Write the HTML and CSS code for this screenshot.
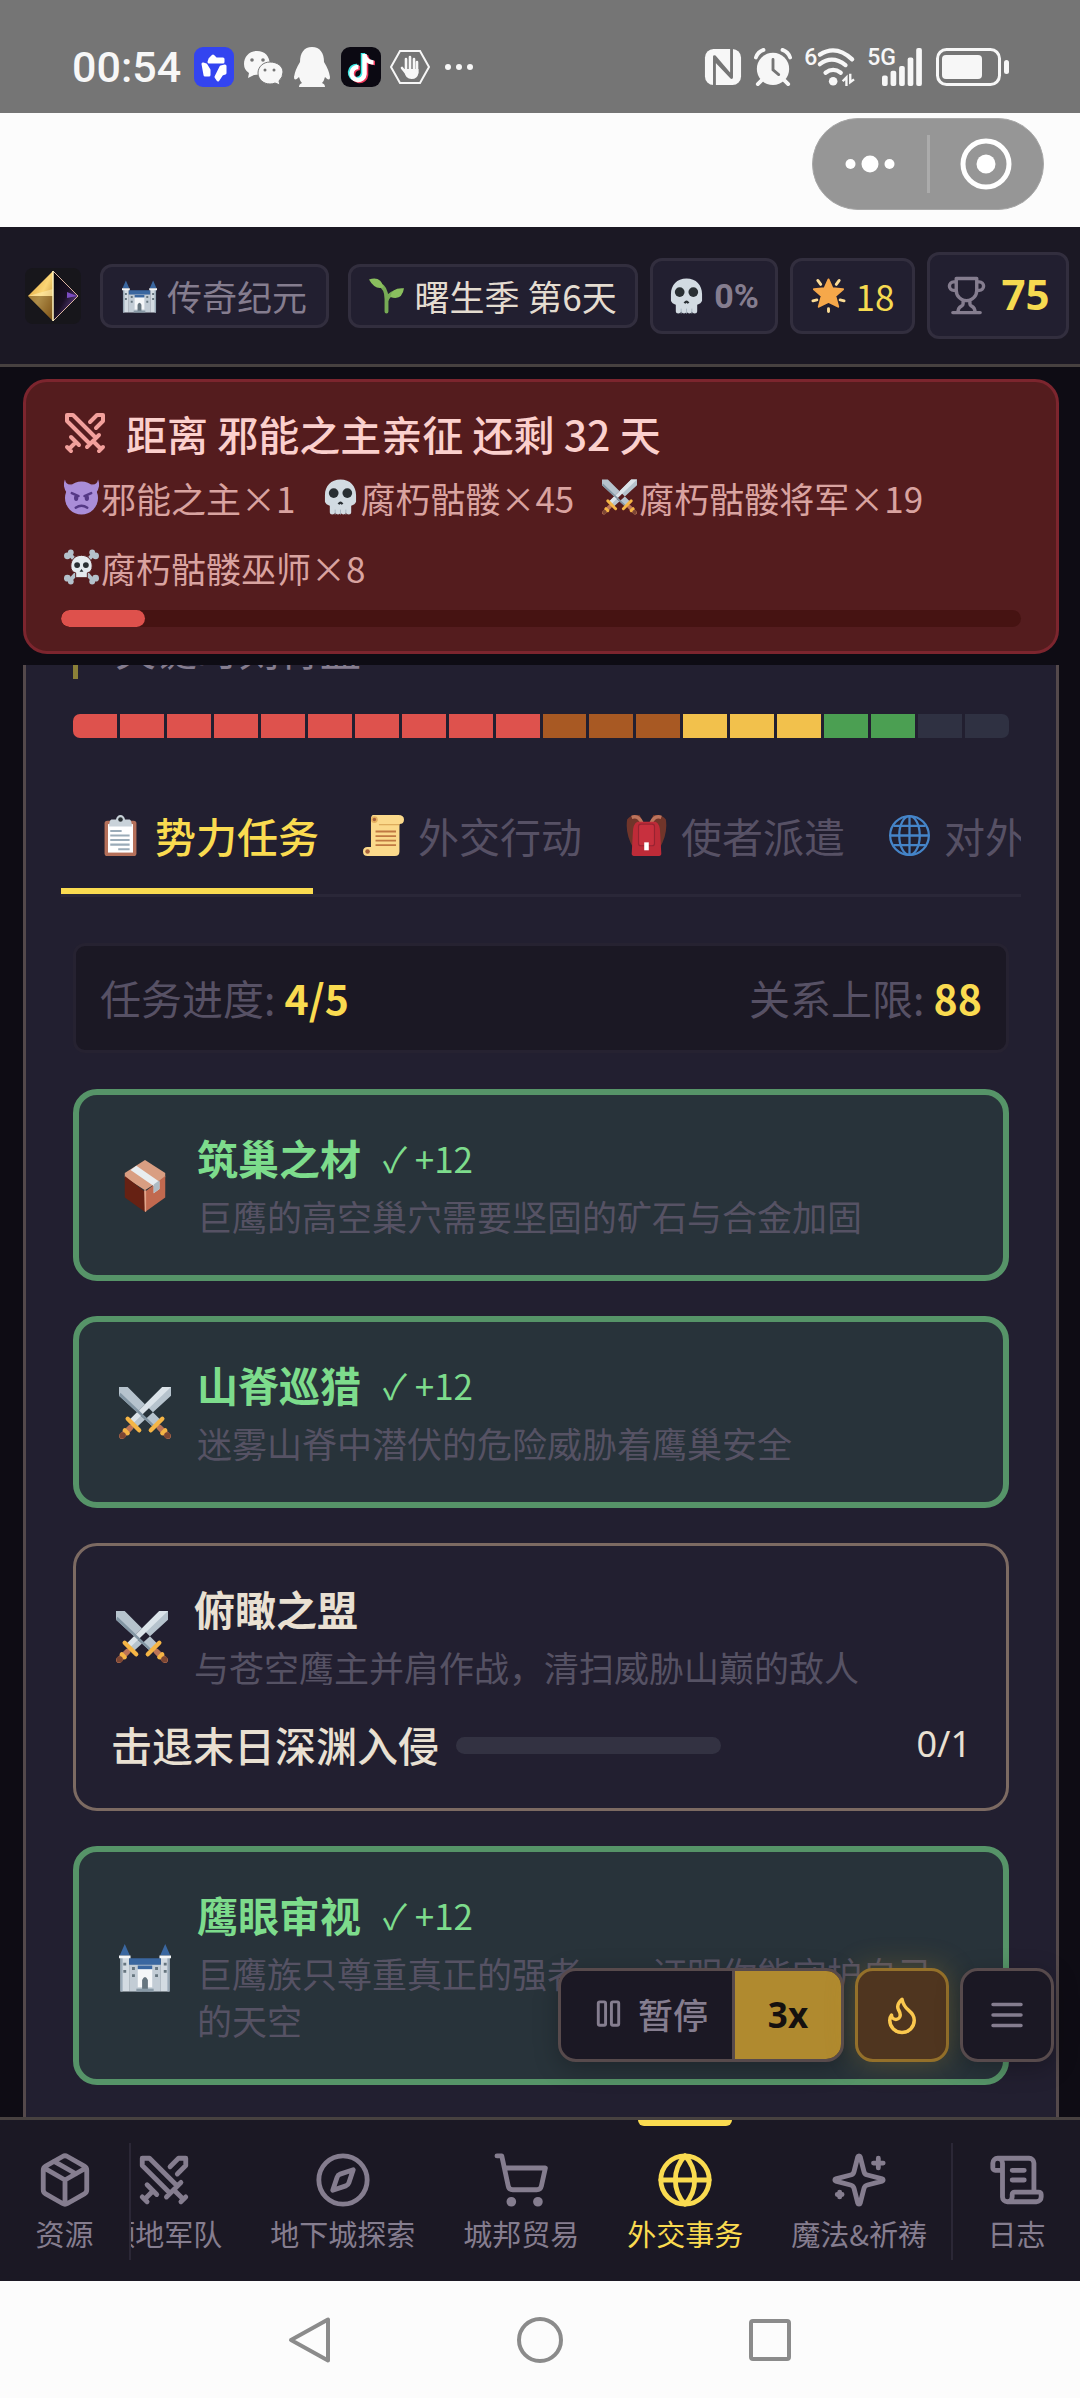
FILE: index.html
```html
<!DOCTYPE html>
<html lang="zh-CN">
<head>
    <meta charset="UTF-8">
    <meta name="viewport" content="width=device-width, initial-scale=1.0">
    <title>外交事务</title>
    <link rel="stylesheet" href="styles.css">
</head>
<body>
    <!-- icon sprite -->
    <svg class="sprite" aria-hidden="true">
        <defs>
            <linearGradient id="gold" x1="0" y1="0" x2="1" y2="1"><stop offset="0" stop-color="#d8982e"/><stop offset=".5" stop-color="#fbd676"/><stop offset="1" stop-color="#a8701c"/></linearGradient>
            <linearGradient id="violet" x1="0" y1="0" x2="1" y2="1"><stop offset="0" stop-color="#0a080c"/><stop offset=".5" stop-color="#1a1024"/><stop offset="1" stop-color="#8a5cc8"/></linearGradient>
        </defs>
        <symbol id="swords" viewBox="0 0 24 24">
            <path d="M14.5 17.5 3 6V3h3l11.5 11.5M13 19l6-6M16 16l4 4M19 21l2-2M14.5 6.5 18 3h3v3l-3.500 3.500M5 14l4 4M7 17l-3 3M3 19l2 2"/>
        </symbol>
        <symbol id="trophy" viewBox="0 0 24 24">
            <path d="M6 9H4.500a2.500 2.500 0 0 1 0-5H6M18 9h1.500a2.500 2.500 0 0 0 0-5H18M4 22h16M10 14.660V17c0 .550-.470.980-.970 1.210C7.850 18.750 7 20.240 7 22M14 14.660V17c0 .550.470.980.970 1.210C16.150 18.750 17 20.240 17 22M18 2H6v7a6 6 0 0 0 12 0V2Z"/>
        </symbol>
        <symbol id="box" viewBox="0 0 24 24">
            <path d="M21 8a2 2 0 0 0-1-1.730l-7-4a2 2 0 0 0-2 0l-7 4A2 2 0 0 0 3 8v8a2 2 0 0 0 1 1.730l7 4a2 2 0 0 0 2 0l7-4A2 2 0 0 0 21 16ZM3.300 7 12 12l8.700-5M12 22V12M7.500 4.270l9 5.150"/>
        </symbol>
        <symbol id="compass" viewBox="0 0 24 24">
            <circle cx="12" cy="12" r="10"/><path d="m16.240 7.760-1.800 5.410a2 2 0 0 1-1.270 1.270L7.760 16.240l1.800-5.410a2 2 0 0 1 1.270-1.270Z"/>
        </symbol>
        <symbol id="cart" viewBox="0 0 24 24">
            <circle cx="8" cy="21" r="1"/><circle cx="19" cy="21" r="1"/><path d="M2.050 2.050h2l2.660 12.420a2 2 0 0 0 2 1.580h9.780a2 2 0 0 0 1.950-1.570l1.650-7.430H5.120"/>
        </symbol>
        <symbol id="globe" viewBox="0 0 24 24">
            <circle cx="12" cy="12" r="10"/><path d="M12 2a14.500 14.500 0 0 0 0 20 14.500 14.500 0 0 0 0-20M2 12h20"/>
        </symbol>
        <symbol id="sparkles" viewBox="0 0 24 24">
            <path d="M9.940 15.500A2 2 0 0 0 8.500 14.060l-6.140-1.580a.5.5 0 0 1 0-.960L8.500 9.940A2 2 0 0 0 9.940 8.500l1.580-6.140a.5.5 0 0 1 .960 0L14.060 8.500A2 2 0 0 0 15.500 9.940l6.140 1.580a.5.5 0 0 1 0 .960L15.500 14.060a2 2 0 0 0-1.440 1.440l-1.580 6.140a.5.5 0 0 1-.960 0ZM20 3v4M22 5h-4M4 17v2M5 18H3"/>
        </symbol>
        <symbol id="scroll" viewBox="0 0 24 24">
            <path d="M15 12h-5M15 8h-5M19 17V5a2 2 0 0 0-2-2H4M8 21h12a2 2 0 0 0 2-2v-1a1 1 0 0 0-1-1H11a1 1 0 0 0-1 1v1a2 2 0 1 1-4 0V5a2 2 0 1 0-4 0v2a1 1 0 0 0 1 1h3"/>
        </symbol>
        <symbol id="flame" viewBox="0 0 24 24">
            <path d="M8.500 14.500A2.500 2.500 0 0 0 11 12c0-1.380-.500-2-1-3-1.070-2.140-.220-4.050 2-6 .500 2.500 2 4.900 4 6.500 2 1.600 3 3.500 3 5.500a7 7 0 1 1-14 0c0-1.150.430-2.290 1-3a2.500 2.500 0 0 0 2.500 2.500z"/>
        </symbol>
        <symbol id="menu" viewBox="0 0 24 24"><path d="M4 6h16M4 12h16M4 18h16"/></symbol>
        <symbol id="pause" viewBox="0 0 24 24"><rect x="5" y="4" width="5" height="16" rx="1"/><rect x="14" y="4" width="5" height="16" rx="1"/></symbol>

        <symbol id="e-castle" viewBox="0 0 36 36">
            <path fill="#d3dbe2" d="M1 11h6v24H1zM29 11h6v24h-6z"/><path fill="#c2ccd5" d="M7 16h22v19H7z"/><path fill="#9aaab8" d="M1 11h1.500v24H1zM33.500 11H35v24h-1.500z"/>
            <path fill="#3a67a0" d="m4 2 3.500 8h-7zM32 2l3.500 8h-7zM7 12h22v4.500H7z"/><path fill="#f4f6f8" d="M0 10h8v2H0zM28 10h8v2h-8zM13 19h10v13H13z"/>
            <path fill="#3a67a0" d="M13 17h10v2.500H13z"/><path fill="#66757f" d="M16 35v-8q2-4 4 0v8zM3 15h2v2H3zM3 20h2v2H3zM31 15h2v2h-2zM31 20h2v2h-2zM9 18h2v2H9zM25 18h2v2h-2zM9 23h2v2H9zM25 23h2v2h-2z"/><path fill="#8899a6" d="M12 33h12v2H12z"/>
        </symbol>
        <symbol id="e-seedling" viewBox="0 0 36 36">
            <path fill="none" stroke="#77ab55" stroke-width="4" stroke-linecap="round" d="M18 34V21Q18 9 10 6M18 23q2-7 9-9"/><path fill="#8abf5e" d="M0 1q12-4 15 8-9 3-15-8zM36 10q-2 13-14 9Q23 9 36 10z"/>
        </symbol>
        <symbol id="e-skull" viewBox="0 0 36 36">
            <path fill="#d2dbe2" d="M18 0C8 0 2 7 2 16v7q1 3 5 4v7q0 2 2.500 2t3-2q1 2 3 2t2.500-2q1 2 3 2t2.500-2q.5 2 3 2t2.500-2v-7q4-1 5-4v-7C34 7 28 0 18 0z"/>
            <circle cx="11" cy="14" r="5" fill="#292f33"/><circle cx="25" cy="14" r="5" fill="#292f33"/><path fill="#292f33" d="M15 25q3-5 6 0l-2 1-1-1-1 1z"/><path stroke="#a9b7c2" d="M12.500 31v5M18 31v5M23.500 31v5"/>
        </symbol>
        <symbol id="e-star" viewBox="0 0 36 36">
            <path stroke="#fbdc95" stroke-width="3" stroke-linecap="round" d="M7 2l3 4M29 2l-3 4M2 23l4-1M34 23l-4-1M18 31v3"/><path fill="#f6a84a" stroke="#f6a84a" stroke-width="2" stroke-linejoin="round" d="m18 1 4 9 11 1-8 7 3 11-10-5-10 5 3-11-8-7 11-1z"/>
        </symbol>
        <symbol id="e-imp" viewBox="0 0 36 36">
            <path fill="#aa8dd8" d="M1 0q1 6 7 5l-5 9Q-2 7 1 0zM35 0q-1 6-7 5l5 9q5-7 2-14z"/><circle cx="18" cy="19" r="17" fill="#aa8dd8"/>
            <path fill="none" stroke="#553986" stroke-width="2.500" stroke-linecap="round" d="m8 14 7 3M28 14l-7 3M12 29q6-4 12 0"/><ellipse cx="12.500" cy="19" rx="2.200" ry="3" fill="#553986"/><ellipse cx="23.500" cy="19" rx="2.200" ry="3" fill="#553986"/>
        </symbol>
        <symbol id="e-swords" viewBox="0 0 36 36">
            <path fill="#b6c3cd" d="M0 0h6l23 23-5 5L0 6zM36 0h-6L7 23l5 5L36 6z"/><path fill="#dbe3e9" d="M36 0h-6L7 23l2.500 2.500z"/><path fill="#8295a3" d="m0 6 1-2 23 22v2z"/>
            <path fill="none" stroke="#bc7456" stroke-width="4" stroke-linecap="round" d="m8 28-6 6M28 28l6 6"/><path fill="none" stroke="#f5b545" stroke-width="3" stroke-linecap="round" d="m6 22 8 8M30 22l-8 8M4 30l2 2M32 30l-2 2"/><circle cx="2.500" cy="33.500" r="2.200" fill="#7c4633"/><circle cx="33.500" cy="33.500" r="2.200" fill="#7c4633"/>
        </symbol>
        <symbol id="e-crossbones" viewBox="0 0 36 36">
            <g fill="#b4c1cb"><path d="m5 7 3-3 23 26-3 3zM31 7l-3-3L5 30l3 3z"/><circle cx="3.500" cy="6.500" r="3.500"/><circle cx="7" cy="3" r="3"/><circle cx="32.500" cy="6.500" r="3.500"/><circle cx="29" cy="3" r="3"/><circle cx="3.500" cy="29.500" r="3.500"/><circle cx="7" cy="33" r="3"/><circle cx="32.500" cy="29.500" r="3.500"/><circle cx="29" cy="33" r="3"/></g>
            <path fill="#e4eaee" stroke="#541c1e" d="M18 6C11 6 7 11 7 17q0 6 5 7v5h12v-5q5-1 5-7C29 11 25 6 18 6z"/><circle cx="13.500" cy="16" r="3" fill="#292f33"/><circle cx="22.500" cy="16" r="3" fill="#292f33"/><path fill="#292f33" d="m16 23 2-3 2 3z"/>
        </symbol>
        <symbol id="e-clipboard" viewBox="0 0 36 36">
            <rect x="4" y="5" width="28" height="31" rx="2.500" fill="#b5705a"/><path fill="#fff" d="M7 8h22v25H7z"/><path fill="none" stroke="#9aabb8" stroke-width="1.800" d="M9 14h10M9 18h17M9 22h17M9 26h17M16 30h10"/>
            <path fill="#c9d2d9" d="M10 4h4q1-4 4-4t4 4h4q2 1 2 6H8q0-5 2-6z"/><circle cx="18" cy="4" r="2" fill="#292f33"/>
        </symbol>
        <symbol id="e-scroll" viewBox="0 0 36 36">
            <path fill="#fbd98b" d="M9 0h22q5 0 5 4t-4 4v24q0 4-4 4H4q-4 0-4-4t4-4h3V4q0-4 2-4z"/><circle cx="10" cy="4" r="3" fill="#e5b15f"/><circle cx="10" cy="4" r="1.500" fill="#a6623c"/><circle cx="4" cy="32" r="2" fill="#a6623c"/><path stroke="#d9a657" d="M14 8.500h18"/><path fill="none" stroke="#c07842" stroke-width="1.600" d="M11 14.500h18M11 18.500h18M11 22.500h18M11 26.500h18"/>
        </symbol>
        <symbol id="e-backpack" viewBox="0 0 36 36">
            <path fill="#70352a" d="M12 0Q5-1 1 4-1 17 7 30h22q8-13 6-26-4-5-11-4l-3 7h-6z"/><path fill="none" stroke="#bd745c" stroke-width="3" d="M14 7Q11 0 5 2M22 7q3-7 9-5"/>
            <path fill="#be2b38" d="M10 6h16q4 2 4 10l1 18q0 2-3 2H8q-3 0-3-2l1-18Q6 8 10 6z"/><rect x="11" y="8" width="14" height="19" rx="2" fill="#c8303e" stroke="#972331"/><path fill="#fff" d="M16 24h4v7h-4z"/>
        </symbol>
        <symbol id="e-globe" viewBox="0 0 36 36">
            <g fill="none" stroke="#4584c8" stroke-width="2"><circle cx="18" cy="18" r="17"/><ellipse cx="18" cy="18" rx="9" ry="17"/><path d="M1 18h34M18 1v34M4 9.500h28M4 26.500h28"/></g>
        </symbol>
        <symbol id="e-package" viewBox="0 0 36 36">
            <path fill="#d99e82" d="m18 0 14 9v3L18 21 4 12V9z"/><path fill="#662113" d="m4 11 14 11v14L4 26z"/><path fill="#c1694f" d="m32 11-14 11v14l14-10z"/><path fill="#e2a58b" d="M17.400 21h1.400v15l-1-.500z"/><path fill="#e8edf0" d="m8 7 4-3 16 11v5l-4 3v-5z"/><path fill="#aebbc4" d="m24 17 4-3v6l-4 3z"/>
        </symbol>
    </svg>

    <div class="statusbar">
        <div class="status-left">
            <span class="clock">00:54</span>
            <svg class="st" viewBox="0 0 40 40"><rect width="40" height="40" rx="9" fill="#3344f0"/><g fill="#fff" stroke="#fff" stroke-width="3" stroke-linejoin="round"><path d="m16 12 3-3 3 3h7v3H15z"/><path d="m9 17 3 1 3 5v5l-4 0z"/><path d="m31 19-4 1-5 10 2 3 4-6 3-1z"/></g></svg>
            <svg class="st" viewBox="0 0 40 40" fill="#f7f7f7"><path d="M14 4C6 4 1 10 1 17q0 6 5 9l-1 5 6-3q12 0 16-10Q26 4 14 4z"/><path stroke="#757575" d="M27 15c-7 0-12 5-12 11s5 11 12 11q3 0 5-1l5 2-1-4q4-4 4-9c0-6-6-10-13-10z"/><g fill="#757575"><circle cx="9" cy="13" r="1.800"/><circle cx="20" cy="13" r="1.800"/><circle cx="22" cy="23" r="1.500"/><circle cx="31" cy="23" r="1.500"/></g></svg>
            <svg class="st" viewBox="0 0 40 40" fill="#f7f7f7"><path d="M20 0C12 0 8 6 8 15q-5 8-6 15 0 5 5 0 1 4 3 6-3 1-3 4h26q0-3-3-4 2-2 3-6 5 5 5 0-1-7-6-15C32 6 28 0 20 0z"/></svg>
            <svg class="st" viewBox="0 0 40 40"><rect width="40" height="40" rx="9" fill="#0b0912"/><g fill="none" stroke-width="4.500"><path stroke="#3ce8e4" d="M22 6v20a6.500 6.500 0 1 1-6-7M22 8q2 7 9 7"/><path stroke="#f2375a" d="M25 8v20a6.500 6.500 0 1 1-6-7M25 9q2 7 9 7"/><path stroke="#fff" d="M23.500 7v20a6.500 6.500 0 1 1-6-7M23.500 8.500q2 7 9 7"/></g></svg>
            <svg class="st" viewBox="0 0 40 40"><path fill="none" stroke="#f7f7f7" stroke-width="2" d="M10 4h20l9 16-9 16H10L1 20z"/><g stroke="#f7f7f7" stroke-width="2.600" stroke-linecap="round"><path d="M16 24V12M20 24V10M24 24V12M27 26V15M16 26l-4-5"/></g><path fill="#f7f7f7" d="M14.500 22h14v4q-1 6-7 6t-7-7z"/></svg>
            <svg class="st" viewBox="0 0 40 40" fill="#f7f7f7"><circle cx="9" cy="20" r="3"/><circle cx="20" cy="20" r="3"/><circle cx="31" cy="20" r="3"/></svg>
        </div>
        <div class="status-right">
            <svg class="st" viewBox="0 0 40 40"><rect x="1" y="1" width="38" height="38" rx="9" fill="#f7f7f7"/><path fill="none" stroke="#757575" stroke-width="3" stroke-linejoin="round" d="M11 40V9l18 21V14M29 0v31L11 12"/></svg>
            <svg class="st" viewBox="0 0 40 40"><circle cx="20" cy="22" r="17" fill="#f7f7f7"/><path fill="none" stroke="#f7f7f7" stroke-width="4" stroke-linecap="round" d="M2 10q2-6 8-8M38 10q-2-6-8-8M8 34l-4 4M32 34l4 4"/><path fill="none" stroke="#757575" stroke-width="3" stroke-linecap="round" d="M20 12v11l6 5"/></svg>
            <div class="net">
                <span class="tag">6</span>
                <svg class="st" viewBox="0 0 40 40"><g fill="none" stroke="#f7f7f7" stroke-width="4.500" stroke-linecap="round"><path d="M3 7q17-11 34 5M3 17q13-10 27 1M9 26q8-6 16 0"/></g><circle cx="17" cy="35" r="4.500" fill="#f7f7f7"/><path fill="none" stroke="#f7f7f7" stroke-width="2.500" d="m27 35 4-4v9M35 27v9l4-3"/></svg>
            </div>
            <div class="net">
                <span class="tag">5G</span>
                <svg class="st" viewBox="0 0 40 40" fill="#f7f7f7"><rect x="0" y="29" width="6" height="11" rx="2"/><rect x="9" y="24" width="6" height="16" rx="2"/><rect x="18" y="19" width="6" height="21" rx="2"/><rect x="27" y="10" width="6" height="30" rx="2"/><rect x="36" y="0" width="6" height="40" rx="2"/></svg>
            </div>
            <svg class="battery" viewBox="0 0 74 38"><rect x="1.500" y="1.500" width="62" height="35" rx="9" fill="none" stroke="#f7f7f7" stroke-width="3"/><rect x="6" y="7" width="40" height="24" rx="4" fill="#f7f7f7"/><rect x="68" y="12" width="5" height="14" rx="2.500" fill="#f7f7f7"/></svg>
        </div>
    </div>

    <div class="titlebar">
        <div class="capsule">
            <button type="button" aria-label="更多"><svg class="dots" viewBox="0 0 50 18" fill="#fff"><circle cx="5.500" cy="9" r="5"/><circle cx="25" cy="9" r="8.500"/><circle cx="44.500" cy="9" r="5"/></svg></button>
            <button type="button" aria-label="关闭"><svg class="ring" viewBox="0 0 52 52" fill="none"><circle cx="26" cy="26" r="23" stroke="#fff" stroke-width="5"/><circle cx="26" cy="26" r="9.500" fill="#fff"/></svg></button>
        </div>
    </div>

    <header class="top">
        <svg class="logo" viewBox="0 0 56 56"><rect width="56" height="56" rx="8" fill="#17161b"/><path fill="url(#gold)" d="M28 3v50L3 28z"/><path fill="url(#violet)" d="M28 3v50l25-25z"/><path fill="#3a1e04" opacity=".4" d="M3 28h25v25z"/><path fill="#fff0b8" opacity=".5" d="m3 28 25-7v7z"/><path fill="#7b4cc0" d="m42 24 10 4-10 2z"/><path fill="none" stroke="#dcb5a0" d="m28 3 25 25-25 25"/><path stroke="#fff3c0" stroke-width="1.500" d="M28 3v50"/></svg>
        <div class="badges">
            <span class="badge"><svg class="emoji"><use href="#e-castle"/></svg>传奇纪元</span>
            <span class="badge season"><svg class="emoji"><use href="#e-seedling"/></svg>曙生季 第6天</span>
        </div>
        <span class="badge threat-rate"><svg class="emoji"><use href="#e-skull"/></svg>0%</span>
        <span class="badge glory"><svg class="emoji"><use href="#e-star"/></svg>18</span>
        <span class="badge score"><svg class="icon"><use href="#trophy"/></svg><b>75</b></span>
    </header>

    <section class="threat">
        <h2><svg class="icon"><use href="#swords"/></svg>距离 邪能之主亲征 还剩 32 天</h2>
        <ul class="foes">
            <li><svg class="emoji"><use href="#e-imp"/></svg>邪能之主×1</li>
            <li><svg class="emoji"><use href="#e-skull"/></svg>腐朽骷髅×45</li>
            <li><svg class="emoji"><use href="#e-swords"/></svg>腐朽骷髅将军×19</li>
            <li><svg class="emoji"><use href="#e-crossbones"/></svg>腐朽骷髅巫师×8</li>
        </ul>
        <div class="bar"><div class="fill" style="width: 8.8%"></div></div>
    </section>

    <main class="content">
        <div class="panel">
            <p class="quote">关键时刻背盟</p>
            <div class="relation">
                <i class="red"></i><i class="red"></i><i class="red"></i><i class="red"></i><i class="red"></i>
                <i class="red"></i><i class="red"></i><i class="red"></i><i class="red"></i><i class="red"></i>
                <i class="orange"></i><i class="orange"></i><i class="orange"></i>
                <i class="yellow"></i><i class="yellow"></i><i class="yellow"></i>
                <i class="green"></i><i class="green"></i>
                <i></i><i></i>
            </div>

            <div class="tabs" role="tablist">
                <button type="button" role="tab" aria-selected="true" class="on"><svg class="emoji"><use href="#e-clipboard"/></svg>势力任务</button>
                <button type="button" role="tab"><svg class="emoji"><use href="#e-scroll"/></svg>外交行动</button>
                <button type="button" role="tab"><svg class="emoji"><use href="#e-backpack"/></svg>使者派遣</button>
                <button type="button" role="tab"><svg class="emoji"><use href="#e-globe"/></svg>对外战争</button>
            </div>

            <div class="summary">
                <span>任务进度: <b>4/5</b></span>
                <span>关系上限: <b>88</b></span>
            </div>

            <div class="tasks">
                <article class="task done">
                    <svg class="pic"><use href="#e-package"/></svg>
                    <div class="info">
                        <h3>筑巢之材<span class="gain">✓ +12</span></h3>
                        <p>巨鹰的高空巢穴需要坚固的矿石与合金加固</p>
                    </div>
                </article>
                <article class="task done">
                    <svg class="pic"><use href="#e-swords"/></svg>
                    <div class="info">
                        <h3>山脊巡猎<span class="gain">✓ +12</span></h3>
                        <p>迷雾山脊中潜伏的危险威胁着鹰巢安全</p>
                    </div>
                </article>
                <article class="task">
                    <svg class="pic"><use href="#e-swords"/></svg>
                    <div class="info">
                        <h3>俯瞰之盟</h3>
                        <p>与苍空鹰主并肩作战，清扫威胁山巅的敌人</p>
                    </div>
                    <div class="goal">
                        <span>击退末日深渊入侵</span>
                        <div class="track"></div>
                        <span class="count">0/1</span>
                    </div>
                </article>
                <article class="task done">
                    <svg class="pic"><use href="#e-castle"/></svg>
                    <div class="info">
                        <h3>鹰眼审视<span class="gain">✓ +12</span></h3>
                        <p>巨鹰族只尊重真正的强者——证明你能守护自己的天空</p>
                    </div>
                </article>
            </div>
        </div>
    </main>

    <div class="bottom">
        <!-- floats over the task list -->
        <div class="float">
            <div class="speed">
                <button type="button" class="pause"><svg class="icon"><use href="#pause"/></svg>暂停</button>
                <button type="button" class="rate">3x</button>
            </div>
            <button type="button" class="fire" aria-label="狂热"><svg class="icon"><use href="#flame"/></svg></button>
            <button type="button" class="more" aria-label="菜单"><svg class="icon"><use href="#menu"/></svg></button>
        </div>
        <nav class="nav">
            <a href="#res" class="side first"><svg class="icon"><use href="#box"/></svg>资源</a>
            <div class="nav-list">
                <a href="#army"><svg class="icon"><use href="#swords"/></svg>领地军队</a>
                <a href="#dungeon"><svg class="icon"><use href="#compass"/></svg>地下城探索</a>
                <a href="#trade"><svg class="icon"><use href="#cart"/></svg>城邦贸易</a>
                <a href="#diplomacy" class="on"><svg class="icon"><use href="#globe"/></svg>外交事务</a>
                <a href="#magic"><svg class="icon"><use href="#sparkles"/></svg>魔法&amp;祈祷</a>
            </div>
            <a href="#log" class="side last"><svg class="icon"><use href="#scroll"/></svg>日志</a>
        </nav>
    </div>

    <div class="sysnav">
        <button type="button" aria-label="返回"><svg viewBox="0 0 48 48"><path d="M42 3.500v41L5 24z"/></svg></button>
        <button type="button" aria-label="主页"><svg viewBox="0 0 48 48"><circle cx="24" cy="24" r="21"/></svg></button>
        <button type="button" aria-label="最近任务"><svg viewBox="0 0 48 48"><rect x="5" y="5" width="38" height="38" rx="2"/></svg></button>
    </div>
</body>
</html>
```

FILE: styles.css
```css
*{ margin: 0; padding: 0; box-sizing: border-box;}
body{ display: flex; flex-direction: column; height: 100vh; overflow: hidden; background: #0e0c14; color: #e9e0d2; font-family: "Noto Sans CJK SC", sans-serif; font-size: 35px;}
button{ border: 0; background: none; color: inherit; font: inherit; cursor: pointer;}
a{ color: inherit; text-decoration: none;}
ul{ list-style: none;}
svg{ display: block; flex: none;}
.sprite{ position: absolute; width: 0; height: 0;}
.icon{ fill: none; stroke: currentColor; stroke-width: 2; stroke-linecap: round; stroke-linejoin: round; overflow: visible;}
.emoji{ width: 35px; height: 36px;}

/* phone status bar */
.statusbar{ display: flex; justify-content: space-between; align-items: center; flex: none; height: 113px; padding: 20px 70px 0 72px; background: #757575; color: #f7f7f7;}
.status-left{ display: flex; align-items: center; gap: 9px;}
.clock{ margin-right: 4px; font: 500 43px/50px Roboto, sans-serif;}
.st{ width: 40px; height: 40px; overflow: visible;}
.status-right{ display: flex; align-items: center; gap: 12px;}
.status-right .st{ width: 38px; height: 38px;}
.net{ display: flex; align-items: flex-start;}
.tag{ font: 500 23px/20px Roboto, sans-serif;}
.net + .net .tag{ margin-right: -14px;}
.battery{ width: 74px; height: 38px; margin-left: 4px;}

.titlebar{ display: flex; justify-content: flex-end; align-items: flex-start; flex: none; height: 114px; padding: 5px 36px 0 0; background: #fcfcfc;}
.capsule{ display: flex; align-items: center; width: 232px; height: 92px; border: 1px solid #a8a8a8; border-radius: 46px; background: #969696;}
.capsule button{ display: flex; justify-content: center; align-items: center; flex: 1; height: 58px;}
.capsule button + button{ border-left: 3px solid #ababab;}
.dots{ width: 50px; height: 18px;}
.ring{ width: 52px; height: 52px;}

/* header */
.top{ display: flex; align-items: center; gap: 12px; flex: none; height: 140px; padding: 0 11px 0 25px; border-bottom: 3px solid #474140; background: #1b1824;}
.logo{ width: 56px; height: 56px; margin-right: 7px;}
.badges{ display: flex; gap: 19px; flex: 1;}
.badge{ display: flex; justify-content: center; align-items: center; gap: 10px; height: 64px; padding: 0 19px; border: 3px solid #322e3e; border-radius: 12px; background: #221f30; color: #857d8f; white-space: nowrap;}
.season{ flex: 1; padding: 0 16px; color: #e4dcd0;}
.threat-rate{ width: 128px; height: 76px; font: 700 34px/40px Roboto, sans-serif;}
.glory{ width: 125px; height: 76px; color: #f6da50;}
.score{ width: 142px; height: 87px; gap: 14px;}
.score .icon{ width: 41px; height: 41px;}
.score b{ padding-bottom: 3px; color: #f6da50; font: 700 42px/50px "Noto Sans", sans-serif;}

/* invasion warning */
.threat{ flex: none; margin: 12px 21px 11px 23px; padding: 19px 35px 24px; border: 3px solid #7c252e; border-radius: 24px; background: #541c1e;}
.threat h2{ display: flex; align-items: center; gap: 17px; height: 64px; color: #fbd0cd; font-size: 41px; font-weight: 500;}
.threat h2 .icon{ width: 48px; height: 48px; color: #f2a09c;}
.foes{ display: flex; flex-wrap: wrap; column-gap: 28px; margin-top: -3px; padding-left: 3px; color: #d9a3a0;}
.foes li{ display: flex; align-items: center; gap: 2px; height: 70px;}
.bar{ height: 17px; margin-top: 8px; border-radius: 9px; background: #461312; overflow: hidden;}
.fill{ height: 100%; border-radius: 9px; background: #de514c;}

/* scrolled page */
.content{ flex: 1; min-height: 0; padding: 0 21px 0 23px; overflow: hidden;}
.panel{ margin-top: -60px; padding: 18px 35px 80px; border: solid #54494b; border-width: 0 3px; background: #221f30;}
.quote{ margin: 0 12px; padding: 0 0 6px 37px; border-left: 5px solid #8b8038; color: #857d8f; font-size: 41px; line-height: 50px;}
.relation{ display: flex; gap: 3px; height: 24px; margin: 35px 12px 0; border-radius: 7px; overflow: hidden;}
.relation i{ flex: 1; background: #2f3142;}
.relation .red{ background: #de524d;}
.relation .orange{ background: #a85923;}
.relation .yellow{ background: #f2c14c;}
.relation .green{ background: #4b9f52;}

.tabs{ display: flex; gap: 44px; height: 110px; margin-top: 49px; padding-left: 39px; border-bottom: 3px solid #2a2738; overflow: hidden;}
.tabs button{ display: flex; align-items: center; gap: 14px; position: relative; flex: none; height: 96px; color: #575165; font-size: 41px;}
.tabs .emoji{ width: 41px; height: 41px;}
.tabs .on{ color: #fadb50; font-weight: 500;}
.tabs .on::after{ content: ""; position: absolute; left: -39px; bottom: -11px; width: 252px; height: 6px; background: #fadb50;}

.summary{ display: flex; justify-content: space-between; align-items: center; height: 110px; margin: 46px 12px 36px; padding: 0 24px 2px; border: 3px solid #262231; border-radius: 12px; background: #1b1824; color: #575165; font-size: 41px;}
.summary b{ color: #fadb50;}

.tasks{ display: flex; flex-direction: column; gap: 35px; margin: 0 12px;}
.task{ display: flex; flex-wrap: wrap; align-items: center; padding: 30px 35px 33px; border: 3px solid #7c6a62; border-radius: 24px;}
.task.done{ padding-bottom: 36px; border: 6px solid #569468; background: #28333a;}
.pic{ width: 52px; height: 52px; margin: 8px 26px 0 5px;}
.info{ flex: 1; padding-right: 21px;}
.info h3{ display: flex; align-items: center; gap: 22px; height: 64px; font-size: 41px;}
.info p{ margin-top: 3px; color: #565264; line-height: 47px;}
.done h3{ color: #7ddc8c;}
.gain{ font-size: 35px; font-weight: 400;}
.goal{ display: flex; align-items: center; gap: 17px; width: 100%; height: 59px; margin-top: 26px; font-size: 41px; font-weight: 500;}
.goal span{ padding-bottom: 4px;}
.track{ width: 265px; height: 17px; border-radius: 9px; background: #333242;}
.goal .count{ margin-left: auto; font: 400 36px/50px "Noto Sans", sans-serif;}

/* bottom navigation */
.bottom{ position: relative; flex: none;}
.float{ display: flex; gap: 11px; position: absolute; right: 26px; bottom: 219px;}
.speed, .fire, .more{ height: 94px; border: 3px solid #574a4c; border-radius: 18px; background: #1b1824; overflow: hidden; box-shadow: 0 6px 24px rgba(0,0,0,.25);}
.speed{ display: flex; color: #857d8f;}
.pause{ display: flex; align-items: center; gap: 12px; padding: 0 24px 3px 30px; font-weight: 500;}
.pause .icon{ width: 35px; height: 35px;}
.rate{ width: 109px; border-left: 3px solid #574a4c; background: #b08a2f; color: #15110f; font: 700 35px/40px "Noto Sans", sans-serif;}
.fire, .more{ display: flex; justify-content: center; align-items: center; width: 94px; color: #857d8f;}
.fire{ border-color: #94702a; background: #4f351f; color: #fbc84e; box-shadow: 0 0 30px rgba(190,140,30,.3);}
.fire .icon, .more .icon{ width: 42px; height: 42px;}

.nav{ display: flex; height: 164px; border-top: 3px solid #474140; background: #1b1824; color: #857d8f; font-size: 29px; line-height: 40px;}
.nav a{ display: flex; flex-direction: column; align-items: center; gap: 4px; flex: none; padding-top: 31px; white-space: nowrap;}
.nav .icon{ width: 58px; height: 58px;}
.nav .side{ height: 117px; margin-top: 23px; padding-top: 8px;}
.nav .first{ width: 131px; border-right: 2px solid #2b2736;}
.nav .last{ width: 129px; border-left: 2px solid #2b2736;}
.nav-list{ display: flex; justify-content: flex-end; flex: 1; min-width: 0; overflow: hidden;}
.nav-list a{ position: relative; padding: 31px 24px 0;}
.nav-list .on{ color: #fadb50;}
.nav-list .on::before{ content: ""; position: absolute; top: 0; left: 50%; width: 94px; height: 6px; margin-left: -47px; border-radius: 0 0 6px 6px; background: #fadb50;}

.sysnav{ display: flex; justify-content: center; align-items: center; gap: 182px; flex: none; height: 117px; background: #fcfcfc;}
.sysnav svg{ width: 48px; height: 48px; fill: none; stroke: #8b8b8b; stroke-width: 4; stroke-linejoin: round;}
```
